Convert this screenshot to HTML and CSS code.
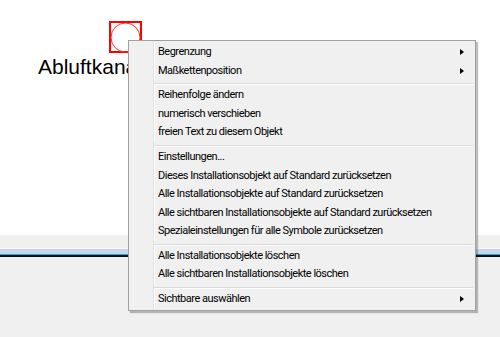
FILE: index.html
```html
<html>
	<head>
		<meta name="viewport" content="width=device-width, initial-scale=1">
		<link rel="stylesheet" href="styles.css">
	</head>
	<body>
		<div class="canvas">
			<svg class="symbol" width="33" height="32" viewBox="0 0 33 32">
				<rect x="1" y="1" width="31" height="30" fill="none" stroke="#ff0000" stroke-width="2" />
				<circle cx="16.5" cy="16.5" r="14.5" fill="none" stroke="#ff3030" stroke-width="1" />
			</svg>
			<div class="label">Abluftkanal</div>
		</div>
		<div class="panel">
			<div class="strip"></div>
		</div>

		<ul class="menu">
			<li class="sub">Begrenzung</li>
			<li class="sub">Maßkettenposition</li>
			<li class="sep"></li>
			<li>Reihenfolge ändern</li>
			<li>numerisch verschieben</li>
			<li>freien Text zu diesem Objekt</li>
			<li class="sep"></li>
			<li>Einstellungen...</li>
			<li>Dieses Installationsobjekt auf Standard zurücksetzen</li>
			<li>Alle Installationsobjekte auf Standard zurücksetzen</li>
			<li>Alle sichtbaren Installationsobjekte auf Standard zurücksetzen</li>
			<li>Spezialeinstellungen für alle Symbole zurücksetzen</li>
			<li class="sep"></li>
			<li>Alle Installationsobjekte löschen</li>
			<li>Alle sichtbaren Installationsobjekte löschen</li>
			<li class="sep"></li>
			<li class="sub">Sichtbare auswählen</li>
		</ul>
	</body>
</html>
```

FILE: styles.css
```css
* {
	box-sizing: border-box;
}

body {
	margin: 0;
	font-family: Roboto, sans-serif;
	background: #fff;
}

.canvas {
	height: 235px;
	padding: 21px 0 0 38px;
}

.symbol {
	display: block;
	margin-left: 71px;
}

.label {
	font-family: "Liberation Sans", Arial, sans-serif;
	font-size: 21px;
	line-height: 24px;
	color: #000;
	margin-top: 2px;
}

.panel {
	height: 102px;
	background: #f0f0f0;
	padding-top: 13px;
}

.strip {
	height: 9px;
	border-top: 1px solid #f8f8f8;
	background: #c3d8ec;
	border-bottom: 2px solid #101010;
	box-shadow: inset 0 -1px 0 #2aa6d8;
}

.menu
{
	position: absolute;
	left: 128px;
	top: 40px;
	width: 348px;
	margin: 0;
	padding: 2px 2px 1px 2px;
	list-style: none;
	background: #f0f0f0;
	border: 1px solid #a0a0a0;
	box-shadow: 2px 2px 1px rgba(0, 0, 0, 0.25);
	font-size: 11px;
	letter-spacing: -0.5px;
	color: #000;
}

.menu::before
{
	content: "";
	position: absolute;
	left: 24px;
	top: 1px;
	bottom: 2px;
	border-left: 1px solid #e2e2e2;
	border-right: 1px solid #fff;
}

.menu li
{
	position: relative;
	height: 18.5px;
	line-height: 18.5px;
	padding-left: 27px;
	white-space: nowrap;
}

.menu li.sep
{
	height: 6.25px;
	margin-left: 23px;
	padding: 0;
	background: linear-gradient(#f0f0f0 2.5px, #dadada 2.5px, #dadada 3.5px, #fff 3.5px, #fff 4.5px, #f0f0f0 4.5px);
}

.menu li.sub::after
{
	content: "";
	position: absolute;
	right: 9px;
	top: 6px;
	border-left: 4px solid #000;
	border-top: 3.5px solid transparent;
	border-bottom: 3.5px solid transparent;
}
```
